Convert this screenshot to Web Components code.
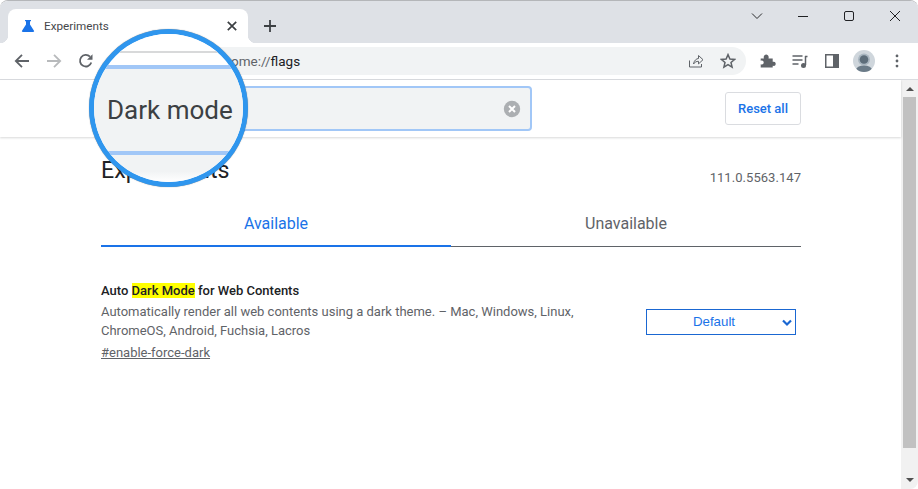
<!DOCTYPE html>
<html lang="en">
<head>
<meta charset="utf-8">
<title>Experiments</title>
<style>
  html, body { margin: 0; height: 100%; background: #fff; overflow: hidden; }
  body { font-family: Roboto, "Liberation Sans", sans-serif; }
</style>
</head>
<body>
<browser-window>
  <tab-strip></tab-strip>
  <tool-bar></tool-bar>
  <flags-page>
    <flag-row title-before="Auto " title-mark="Dark Mode" title-after=" for Web Contents" link="#enable-force-dark">
      Automatically render all web contents using a dark theme. – Mac, Windows, Linux, ChromeOS, Android, Fuchsia, Lacros
    </flag-row>
  </flags-page>
  <mag-lens slot="overlay">Dark mode</mag-lens>
</browser-window>

<script>
class BrowserWindow extends HTMLElement {
  constructor() {
    super();
    this.attachShadow({ mode: 'open' });
    this.shadowRoot.innerHTML = `
      <style>
        :host {
          display: flex; flex-direction: column; position: relative;
          width: 918px; height: 489px; overflow: hidden;
          border-radius: 8px;
          box-sizing: border-box; border-top: 1px solid #b4b6b9;
        }
      </style>
      <slot></slot>
      <slot name="overlay"></slot>
    `;
  }
}
customElements.define('browser-window', BrowserWindow);

class TabStrip extends HTMLElement {
  constructor() {
    super();
    this.attachShadow({ mode: 'open' });
    this.shadowRoot.innerHTML = `
      <style>
        :host { display: flex; height: 42px; background: #dee1e6; flex: none; align-items: flex-end; color: #202124; }
        .tab {
          position: relative; width: 240px; height: 34px; margin-left: 8px; box-sizing: border-box;
          background: #fff; border-radius: 8px 8px 0 0; display: flex; align-items: center; padding: 0 8px 0 12px;
        }
        .tab::before, .tab::after {
          content: ""; position: absolute; bottom: 0; width: 8px; height: 8px;
          background: radial-gradient(circle at 0 0, transparent 8px, #fff 8.5px);
        }
        .tab::before { left: -8px; }
        .tab::after { right: -8px; transform: scaleX(-1); }
        .label { font: 11.7px Roboto, sans-serif; margin-left: 8px; flex: 1; color: #45474a; }
        .new { margin-left: 14px; align-self: center; margin-top: 8px; display: flex; }
        .caption { margin-left: auto; display: flex; align-self: flex-start; }
        .caption span { width: 46px; height: 30px; display: flex; align-items: center; justify-content: center; }
      </style>
      <div class="tab">
        <svg width="16" height="16" viewBox="0 0 16 16"><path d="M5 2h6v1.200h-1v3.400l4 6.200c.4.700 0 1.200-.9 1.200H2.900c-.9 0-1.300-.5-.9-1.200l4-6.200V3.200H5z" fill="#1a73e8"/></svg>
        <span class="label">Experiments</span>
        <svg width="16" height="16" viewBox="0 0 16 16"><path d="M3.800 3.800l8.400 8.400M12.200 3.800l-8.400 8.400" stroke="#3c4043" stroke-width="1.700" fill="none"/></svg>
      </div>
      <span class="new"><svg width="16" height="16" viewBox="0 0 16 16"><path d="M8 2v12M2 8h12" stroke="#3c4043" stroke-width="1.800" fill="none"/></svg></span>
      <div class="caption">
        <span><svg width="14" height="14" viewBox="0 0 14 14"><path d="M2 4.500l5 5 5-5" stroke="#2a2b2d" fill="none"/></svg></span>
        <span><svg width="14" height="14" viewBox="0 0 14 14"><path d="M2 7.500h10" stroke="#202124" stroke-width="1.100" fill="none"/></svg></span>
        <span><svg width="14" height="14" viewBox="0 0 14 14"><rect x="2.500" y="2.500" width="9" height="9" rx="1.500" stroke="#202124" fill="none"/></svg></span>
        <span><svg width="14" height="14" viewBox="0 0 14 14"><path d="M2 2l10 10M12 2L2 12" stroke="#202124" fill="none"/></svg></span>
      </div>
    `;
  }
}
customElements.define('tab-strip', TabStrip);

class ToolBar extends HTMLElement {
  constructor() {
    super();
    this.attachShadow({ mode: 'open' });
    this.shadowRoot.innerHTML = `
      <style>
        :host {
          display: flex; align-items: center; flex: none; height: 37px; box-sizing: border-box;
          background: #fff; border-bottom: 1px solid #dadce0; padding-left: 14px; color: #5f6368;
        }
        .nav { display: flex; gap: 16px; }
        svg { display: block; }
        .omni {
          margin-left: 17px; width: 635px; height: 28px; background: #f1f3f4; border-radius: 14px;
          display: flex; align-items: center; box-sizing: border-box; padding: 0 10px 0 0;
        }
        .url { font: 13.5px Roboto, sans-serif; color: #202124; margin-left: 101px; flex: 1; }
        .url i { font-style: normal; color: #5f6368; }
        .omni svg + svg { margin-left: 16px; }
        .tools { display: flex; align-items: center; margin-left: 14px; }
      </style>
      <div class="nav">
        <svg width="16" height="16" viewBox="0 0 16 16"><path d="M15 8H2M8 1.800L1.800 8 8 14.200" stroke="#5f6368" stroke-width="1.800" fill="none"/></svg>
        <svg width="16" height="16" viewBox="0 0 16 16"><path d="M1 8h13M8 1.800L14.200 8 8 14.200" stroke="#b8babc" stroke-width="1.800" fill="none"/></svg>
        <svg width="16" height="16" viewBox="0 0 16 16"><path d="M13.300 9.500A5.800 5.800 0 1 1 12 3.700" stroke="#5f6368" stroke-width="1.800" fill="none"/><path d="M14.500 1.200v5.600H9z" fill="#5f6368"/></svg>
      </div>
      <div class="omni">
        <span class="url"><i>chrome://</i>flags</span>
        <svg width="16" height="16" viewBox="0 0 16 16"><path d="M1.500 7.500v6.500h12v-3M5.500 11C6 7.500 8.500 5.500 10.500 5.500V2.500l4.500 4.200-4.500 4.200V8.300C8.500 8.300 6.800 9 5.500 11z" stroke="#5f6368" fill="none"/></svg>
        <svg width="16" height="16" viewBox="0 0 16 16"><path d="M8 1.600l1.900 4.400 4.700.4-3.600 3.100 1.100 4.700L8 11.700l-4.100 2.500L5 9.500 1.400 6.400l4.700-.4z" stroke="#5f6368" stroke-width="1.500" fill="none"/></svg>
      </div>
      <div class="tools">
        <svg width="16" height="16" viewBox="0 0 16 16"><path d="M1 6h3.200c-.8-2.500 1-4 2.300-4s3.100 1.500 2.300 4H13v3.300c2.500-.6 3 1 3 2s-.5 2.600-3 2V15H1v-3.200c2 .7 3-.5 3-1.800S3 7.500 1 8.200z" fill="#5f6368" transform="translate(-.3 -.5)"/></svg>
        <svg style="margin-left:16px" width="16" height="16" viewBox="0 0 16 16"><path d="M.5 3h10M.5 7h10M.5 11h6" stroke="#5f6368" stroke-width="1.400" fill="none"/><path d="M13 3.500h2.500M13.500 3v9" stroke="#5f6368" stroke-width="1.500" fill="none"/><circle cx="11.500" cy="12.500" r="2.500" fill="#5f6368"/></svg>
        <svg style="margin-left:16px" width="16" height="16" viewBox="0 0 16 16"><path fill-rule="evenodd" d="M1 1h14v14H1zM2.500 2.500v11H9v-11z" fill="#5f6368"/></svg>
        <svg style="margin-left:13px" width="22" height="22" viewBox="0 0 22 22">
          <circle cx="11" cy="11" r="11" fill="#cfd6dc"/>
          <clipPath id="av"><circle cx="11" cy="11" r="11"/></clipPath>
          <g clip-path="url(#av)"><circle cx="11" cy="9.500" r="6" fill="#a9b6c0"/><circle cx="11" cy="9.500" r="4.300" fill="#5d6d7a"/><ellipse cx="11" cy="20" rx="8" ry="4.500" fill="#6b7b88"/></g>
        </svg>
        <svg style="margin-left:14px" width="16" height="16" viewBox="0 0 16 16"><g fill="#5f6368"><circle cx="8" cy="2.900" r="1.400"/><circle cx="8" cy="8" r="1.400"/><circle cx="8" cy="13.100" r="1.400"/></g></svg>
      </div>
    `;
  }
}
customElements.define('tool-bar', ToolBar);

class FlagsPage extends HTMLElement {
  constructor() {
    super();
    this.attachShadow({ mode: 'open' });
    this.shadowRoot.innerHTML = `
      <style>
        :host { display: flex; flex: 1; min-height: 0; color: #202124; font-family: Roboto, sans-serif; }
        .page { flex: 1; min-width: 0; }
        .head {
          height: 57px; box-sizing: border-box; display: flex; align-items: center; padding: 0 100px 0 100px;
          justify-content: space-between; box-shadow: 0 1px 2px rgba(60,64,67,.2); position: relative;
        }
        .search {
          width: 432px; height: 45px; box-sizing: border-box; background: #f1f3f4; border: 2px solid #a1c7f7;
          border-radius: 4px; display: flex; align-items: center; justify-content: flex-end; padding-right: 9px;
        }
        button {
          width: 76px; height: 33px; background: #fff; border: 1px solid #dadce0; border-radius: 3px;
          color: #1a73e8; font: 500 13px Roboto, sans-serif; padding: 0;
        }
        .wrap { width: 700px; margin-left: 101px; }
        .title { display: flex; justify-content: space-between; align-items: flex-end; height: 49px; }
        h1 { font: 400 23.2px/32px Roboto, sans-serif; margin: 0; }
        .version { font-size: 13px; color: #5f6368; padding-bottom: 1px; letter-spacing: .05px; }
        .tabs { display: flex; margin-top: 13px; border-bottom: 1px solid #5f6368; height: 48px; box-sizing: border-box; }
        .tabs div { flex: 1; display: flex; align-items: center; justify-content: center; font-size: 16px; color: #5f6368; padding-top: 1px; box-sizing: border-box; }
        .tabs .on { color: #1a73e8; border-bottom: 2px solid #1a73e8; margin-bottom: -1px; padding-top: 3px; }
        .scroll { width: 17px; background: #f1f1f1; flex: none; display: flex; flex-direction: column; align-items: center; }
        .scroll i { width: 0; height: 0; border: 4px solid transparent; flex: none; }
        .up { border-bottom-color: #505050 !important; border-top: 0 !important; margin: 7px 0 6px; }
        .down { border-top-color: #505050 !important; border-bottom: 0 !important; margin: auto 0 7px; }
        .thumb { height: 351px; width: 13px; background: #c1c1c1; flex: none; }
        ::slotted(flag-row) { margin-top: 36px; }
      </style>
      <div class="page">
        <div class="head">
          <div class="search">
            <svg width="18" height="18" viewBox="0 0 18 18"><circle cx="9" cy="9" r="8.200" fill="#acafb2"/><path d="M6 6l6 6M12 6l-6 6" stroke="#fff" stroke-width="2"/></svg>
          </div>
          <button>Reset all</button>
        </div>
        <div class="wrap">
          <div class="title"><h1>Experiments</h1><span class="version">111.0.5563.147</span></div>
          <div class="tabs"><div class="on">Available</div><div>Unavailable</div></div>
          <slot></slot>
        </div>
      </div>
      <div class="scroll">
        <i class="up"></i>
        <div class="thumb"></div>
        <i class="down"></i>
      </div>
    `;
  }
}
customElements.define('flags-page', FlagsPage);

class FlagRow extends HTMLElement {
  constructor() {
    super();
    this.attachShadow({ mode: 'open' });
    const before = this.getAttribute('title-before') || '';
    const mark = this.getAttribute('title-mark') || '';
    const after = this.getAttribute('title-after') || '';
    const link = this.getAttribute('link') || '';
    this.shadowRoot.innerHTML = `
      <style>
        :host { display: flex; justify-content: space-between; font-size: 13px; }
        .text { width: 490px; }
        .name { font-weight: 500; line-height: 16px; color: #202124; margin-bottom: 3px; }
        mark { background: #ff0; color: inherit; }
        .desc { color: #5f6368; line-height: 19px; }
        a { display: block; color: #5f6368; text-decoration: underline; line-height: 16px; margin-top: 5px; }
        .select {
          width: 150px; height: 26px; box-sizing: border-box; border: 1px solid #1a67d2; margin: 26px 5px 0 0;
          position: relative; display: flex; align-items: center; justify-content: center; padding: 0 14px 2px 0;
          color: #1a73e8; font: 13.300px "Liberation Sans", sans-serif;
        }
        .select svg { position: absolute; right: 2px; top: 8px; }
      </style>
      <div class="text">
        <div class="name">${before}<mark>${mark}</mark>${after}</div>
        <div class="desc"><slot></slot></div>
        <a>${link}</a>
      </div>
      <div class="select">Default
        <svg width="12" height="10" viewBox="0 0 12 10"><path d="M2 2.500L6 6.500l4-4" stroke="#1a67d2" stroke-width="2.200" fill="none"/></svg>
      </div>
    `;
  }
}
customElements.define('flag-row', FlagRow);

class MagLens extends HTMLElement {
  constructor() {
    super();
    this.attachShadow({ mode: 'open' });
    this.shadowRoot.innerHTML = `
      <style>
        :host {
          display: flex; flex-direction: column; position: absolute; left: 89px; top: 28px;
          width: 159px; height: 158px; box-sizing: border-box; border: 5px solid #2f96ee; border-radius: 50%;
          overflow: hidden; background: #fff; box-shadow: 0 0 1px rgba(0,0,0,.5);
        }
        .gap { height: 17px; background: #fff; flex: none; }
        .rule { height: 2px; background: #d8d9da; flex: none; }
        .white { height: 12px; flex: none; }
        .blue { height: 4px; background: #a1c7f7; flex: none; }
        .field {
          flex: none; height: 82px; background: #f1f3f4; display: flex; align-items: center;
          padding-left: 13px; font: 26px/1 Roboto, sans-serif; color: #3c4043;
        }
        .under { flex: 1; background: linear-gradient(#f1f3f4 60%, #fff); }
      </style>
      <div class="gap"></div>
      <div class="rule"></div>
      <div class="white"></div>
      <div class="blue"></div>
      <div class="field"><slot></slot></div>
      <div class="blue"></div>
      <div class="under"></div>
    `;
  }
}
customElements.define('mag-lens', MagLens);
</script>
</body>
</html>
